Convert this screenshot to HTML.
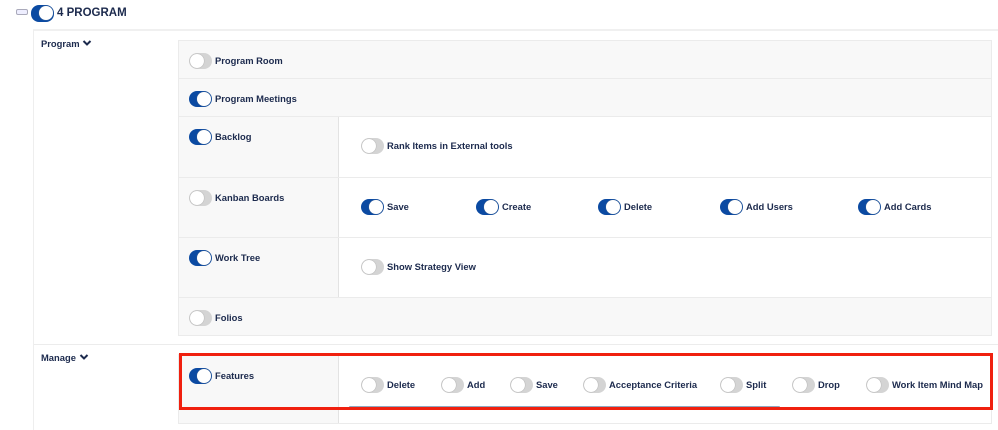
<!DOCTYPE html>
<html><head><style>
body{margin:0;width:998px;height:422px;background:#fff;position:relative;overflow:hidden;font-family:"Liberation Sans",sans-serif;font-weight:bold;font-size:9.4px;color:#1c2a4d}
.a{position:absolute}
.t{position:absolute;width:23px;height:16px;border-radius:8px;background:#d4d4d4;box-sizing:border-box}
.t::after{content:"";position:absolute;left:1px;top:1px;width:14px;height:14px;border-radius:50%;background:#fff;box-shadow:0 0 1px #888}
.t.on{background:#0b4aa2}
.t.on::after{left:8px}
.l{position:absolute;white-space:nowrap;line-height:12px}
.row{position:absolute;left:178px;width:814px;background:#f8f8f8;border:1px solid #ebebeb;box-sizing:border-box}
.right{position:absolute;left:159px;top:0;bottom:0;right:0;background:#fff;border-left:1px solid #e3e3e3}
</style></head><body>
<div class="a" style="left:16px;top:9px;width:10px;height:4px;border:1px solid #aab;border-radius:2px;background:#eef"></div>
<div class="t on" style="left:31px;top:5px;width:23px;height:17px"></div>
<div class="l" style="left:57px;top:7px;font-size:11.5px">4 PROGRAM</div>
<div class="a" style="left:33px;top:29px;right:0;height:2px;background:#f0f0f0"></div>
<div class="a" style="left:33px;top:30px;width:1px;height:400px;background:#eee"></div>
<div class="l" style="left:41px;top:38px">Program</div>
<svg class="a" style="left:82px;top:39px" width="10" height="8"><path d="M1.5 2 L5 5.5 L8.5 2" stroke="#1c2a4d" stroke-width="2" fill="none"/></svg>

<div class="row" style="top:40px;height:39px"><div class="t" style="left:10px;top:12px"></div><div class="l" style="left:36px;top:14px">Program Room</div></div>
<div class="row" style="top:78px;height:39px"><div class="t on" style="left:10px;top:12px"></div><div class="l" style="left:36px;top:14px">Program Meetings</div></div>
<div class="row" style="top:116px;height:62px"><div class="t on" style="left:10px;top:12px"></div><div class="l" style="left:36px;top:14px">Backlog</div>
<div class="right"><div class="t" style="left:22px;top:21px"></div><div class="l" style="left:48px;top:23px">Rank Items in External tools</div></div></div>
<div class="row" style="top:177px;height:61px"><div class="t" style="left:10px;top:12px"></div><div class="l" style="left:36px;top:14px">Kanban Boards</div>
<div class="right">
<div class="t on" style="left:22px;top:21px"></div><div class="l" style="left:48px;top:23px">Save</div>
<div class="t on" style="left:137px;top:21px"></div><div class="l" style="left:163px;top:23px">Create</div>
<div class="t on" style="left:259px;top:21px"></div><div class="l" style="left:285px;top:23px">Delete</div>
<div class="t on" style="left:381px;top:21px"></div><div class="l" style="left:407px;top:23px">Add Users</div>
<div class="t on" style="left:519px;top:21px"></div><div class="l" style="left:545px;top:23px">Add Cards</div>
</div></div>
<div class="row" style="top:237px;height:61px"><div class="t on" style="left:10px;top:12px"></div><div class="l" style="left:36px;top:14px">Work Tree</div>
<div class="right"><div class="t" style="left:22px;top:21px"></div><div class="l" style="left:48px;top:23px">Show Strategy View</div></div></div>
<div class="row" style="top:297px;height:39px"><div class="t" style="left:10px;top:12px"></div><div class="l" style="left:36px;top:14px">Folios</div></div>

<div class="a" style="left:34px;top:344px;right:0;height:1px;background:#ececec"></div>
<div class="l" style="left:41px;top:352px">Manage</div>
<svg class="a" style="left:79px;top:353px" width="10" height="8"><path d="M1.5 2 L5 5.5 L8.5 2" stroke="#1c2a4d" stroke-width="2" fill="none"/></svg>

<div class="row" style="top:354px;height:70px"><div class="t on" style="left:10px;top:13px"></div><div class="l" style="left:36px;top:15px">Features</div>
<div class="right">
<div class="t" style="left:22px;top:22px"></div><div class="l" style="left:48px;top:24px">Delete</div>
<div class="t" style="left:102px;top:22px"></div><div class="l" style="left:128px;top:24px">Add</div>
<div class="t" style="left:171px;top:22px"></div><div class="l" style="left:197px;top:24px">Save</div>
<div class="t" style="left:244px;top:22px"></div><div class="l" style="left:270px;top:24px">Acceptance Criteria</div>
<div class="t" style="left:381px;top:22px"></div><div class="l" style="left:407px;top:24px">Split</div>
<div class="t" style="left:453px;top:22px"></div><div class="l" style="left:479px;top:24px">Drop</div>
<div class="t" style="left:527px;top:22px"></div><div class="l" style="left:553px;top:24px">Work Item Mind Map</div>
<div class="a" style="left:10px;top:51px;width:431px;height:3px;background:#8fa8c0;border-radius:1px"></div>
</div></div>
<div class="a" style="left:179px;top:353px;width:814px;height:57px;border:3px solid #f0200f;box-sizing:border-box"></div>
</body></html>
